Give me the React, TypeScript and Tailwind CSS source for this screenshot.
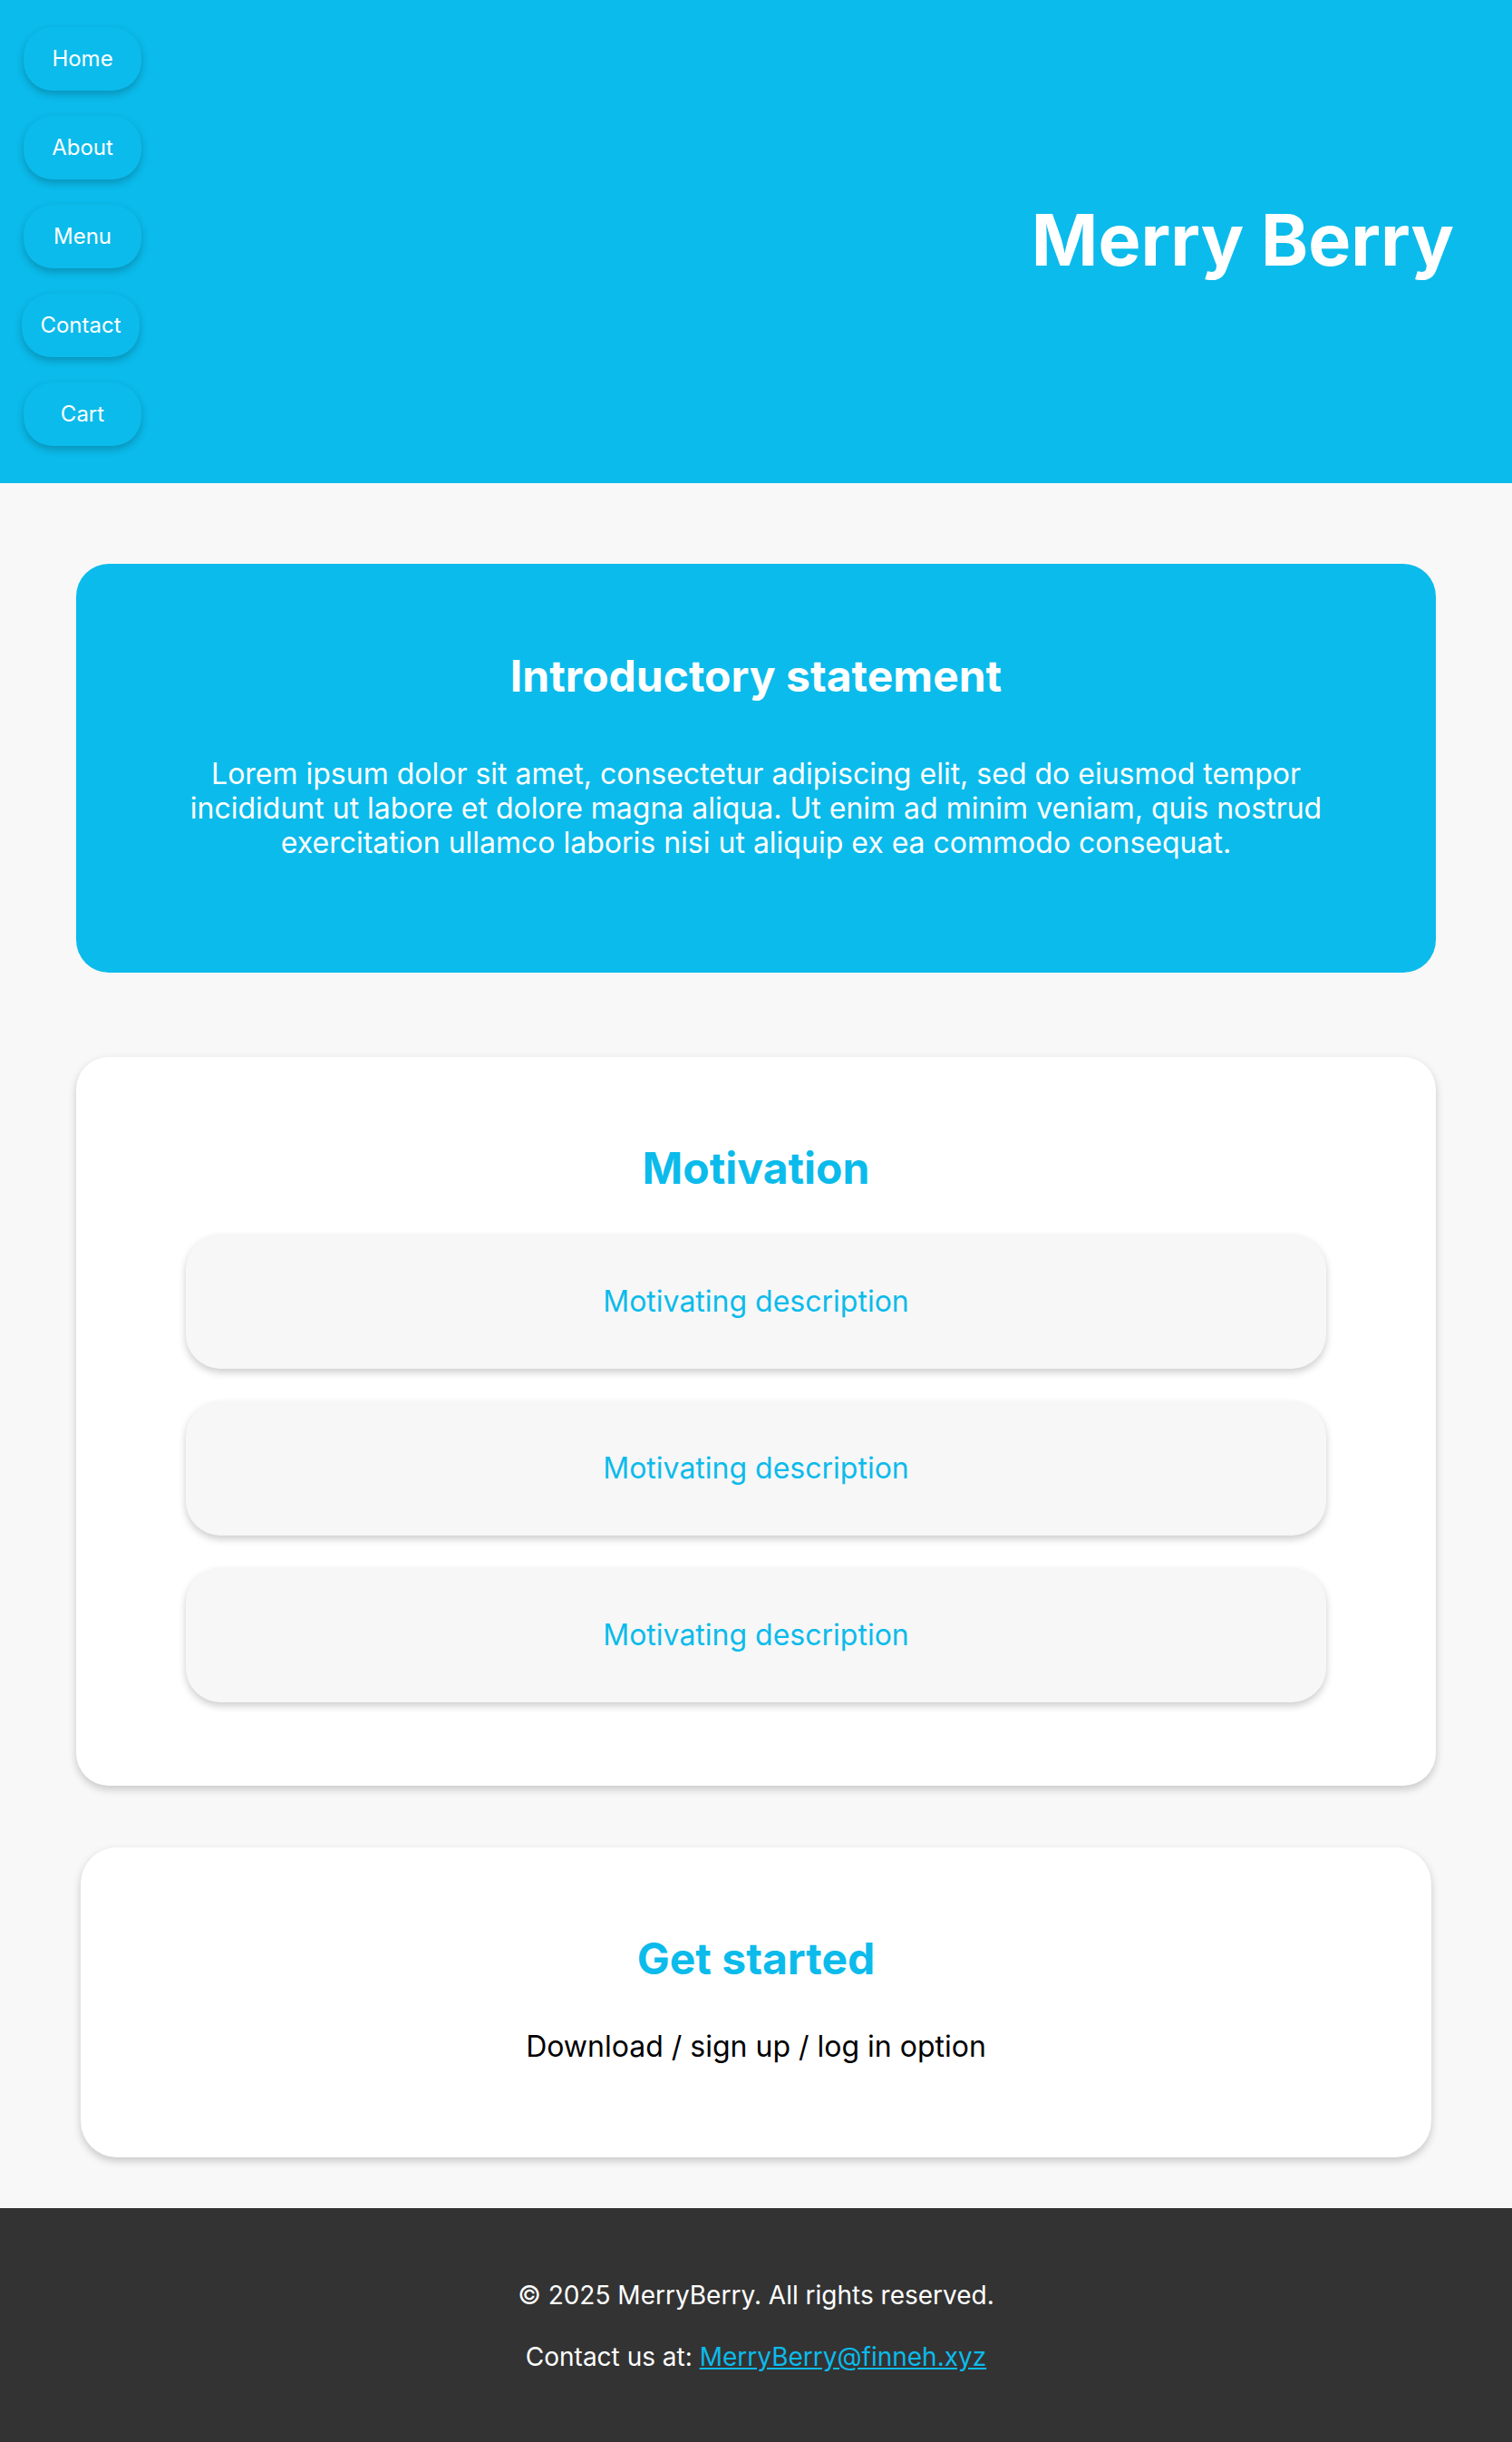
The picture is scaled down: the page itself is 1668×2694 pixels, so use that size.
import React from "react";

const navItems = [
  { label: "Home", ml: "ml-[26px]" },
  { label: "About", ml: "ml-[26px]" },
  { label: "Menu", ml: "ml-[26px]" },
  { label: "Contact", ml: "ml-[24px]" },
  { label: "Cart", ml: "ml-[26px]" },
];

export default function App() {
  return (
    <div className="min-h-[2694px] bg-[#f8f8f8] font-['Inter',sans-serif]">
      <header className="h-[533px] bg-[#0bbbeb] flex justify-between items-center">
        <nav className="self-start flex flex-col gap-[28px] pt-[30px]">
          {navItems.map((n) => (
            <a
              key={n.label}
              href="#"
              className={`${n.ml} w-[130px] h-[70px] rounded-[32px] bg-[#0bbbeb] text-white text-[24px] flex items-center justify-center shadow-[0_4px_8px_rgba(0,0,0,0.22)]`}
            >
              {n.label}
            </a>
          ))}
        </nav>
        <h1 className="mr-[64px] text-white font-bold text-[79px] leading-[96px] mb-[6px]">
          Merry Berry
        </h1>
      </header>

      <main className="pt-[89px] flex flex-col items-center">
        <section className="w-[1500px] rounded-[36px] bg-[#0bbbeb] pt-[95px] pb-[124px] flex flex-col items-center text-center">
          <h2 className="text-white font-bold text-[48px] leading-[58px]">Introductory statement</h2>
          <p className="mt-[60px] max-w-[1300px] text-white text-[32px] leading-[38px]">
            Lorem ipsum dolor sit amet, consectetur adipiscing elit, sed do eiusmod tempor incididunt ut labore et dolore magna aliqua. Ut enim ad minim veniam, quis nostrud exercitation ullamco laboris nisi ut aliquip ex ea commodo consequat.
          </p>
        </section>

        <section className="mt-[93px] w-[1500px] rounded-[36px] bg-white pt-[94px] pb-[92px] flex flex-col items-center shadow-[0_4px_10px_rgba(0,0,0,0.2)]">
          <h2 className="text-[#0bbbeb] font-bold text-[48px] leading-[58px]">Motivation</h2>
          <div className="mt-[44px] flex flex-col gap-[36px]">
            {[0, 1, 2].map((i) => (
              <div
                key={i}
                className="w-[1258px] h-[148px] rounded-[38px] bg-[#f7f7f7] flex items-center justify-center shadow-[0_4px_8px_rgba(0,0,0,0.2)]"
              >
                <span className="text-[#0bbbeb] text-[32px] leading-[38px]">Motivating description</span>
              </div>
            ))}
          </div>
        </section>

        <section className="mt-[68px] w-[1490px] rounded-[40px] bg-white pt-[94px] pb-[103px] flex flex-col items-center shadow-[0_4px_10px_rgba(0,0,0,0.2)]">
          <h2 className="text-[#0bbbeb] font-bold text-[48px] leading-[58px]">Get started</h2>
          <p className="mt-[49px] text-black text-[32px] leading-[38px]">Download / sign up / log in option</p>
        </section>
      </main>

      <footer className="mt-[56px] bg-[#333333] pt-[80px] pb-[77px] flex flex-col items-center text-white text-[28px] leading-[33px]">
        <p>© 2025 MerryBerry. All rights reserved.</p>
        <p className="mt-[35px]">
          Contact us at:{" "}
          <a href="#" className="text-[#0bbbeb] underline">
            MerryBerry@finneh.xyz
          </a>
        </p>
      </footer>
    </div>
  );
}
